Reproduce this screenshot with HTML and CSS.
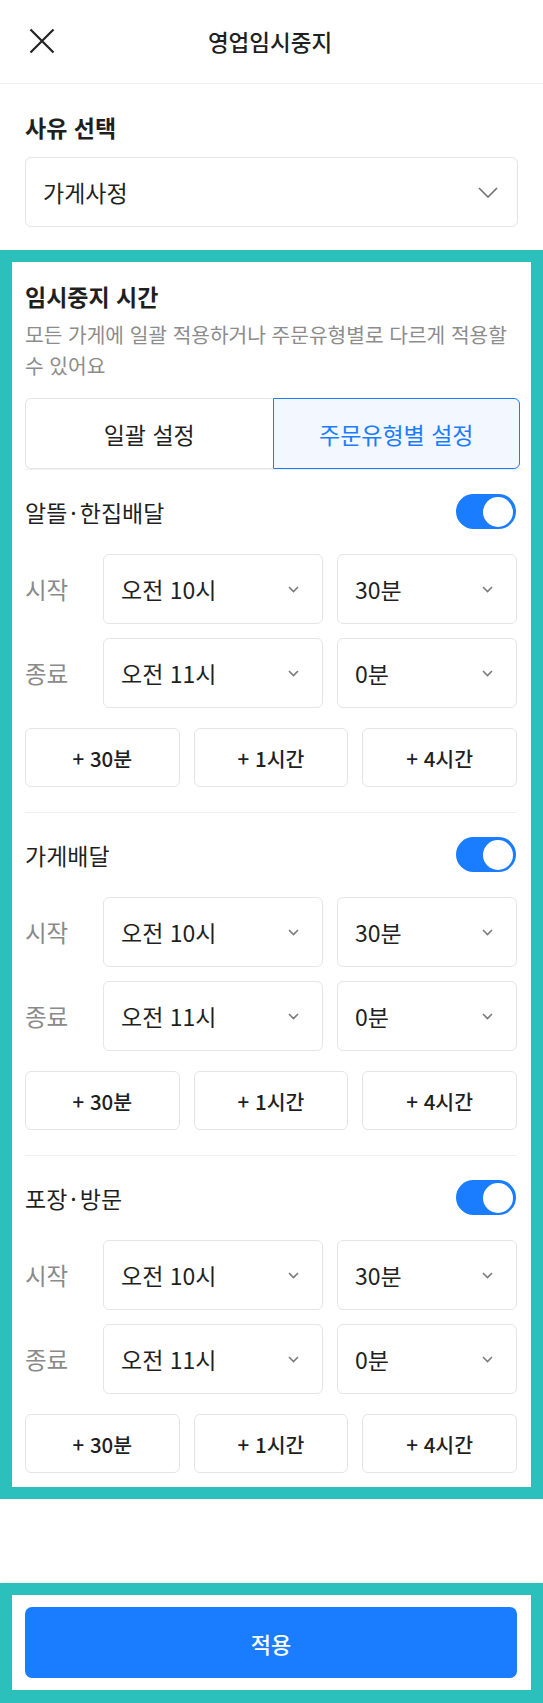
FILE: index.html
```html
<!DOCTYPE html>
<html lang="ko">
<head>
<meta charset="utf-8">
<title>영업임시중지</title>
<link rel="stylesheet" href="styles.css">
</head>
<body>
<div class="page">
  <header class="topbar">
    <button class="close" aria-label="닫기">
      <svg width="26" height="26" viewBox="0 0 26 26"><path d="M1.5 1.5 L24.5 24.5 M24.5 1.5 L1.5 24.5" stroke="#222" stroke-width="2.2" fill="none"/></svg>
    </button>
    <h1 class="topbar-title">영업임시중지</h1>
    <span class="topbar-side"></span>
  </header>

  <section class="reason">
    <h2 class="section-title">사유 선택</h2>
    <div class="select select-lg">
      <span>가게사정</span>
      <svg class="chev-lg" width="20" height="11" viewBox="0 0 20 11"><path d="M1 1 L10 10 L19 1" stroke="#6f6f6f" stroke-width="1.6" fill="none"/></svg>
    </div>
  </section>

  <section class="frame time-frame">
    <h2 class="section-title">임시중지 시간</h2>
    <p class="desc">모든 가게에 일괄 적용하거나 주문유형별로 다르게 적용할 수 있어요</p>
    <div class="segmented">
      <button class="seg">일괄 설정</button>
      <button class="seg seg-active">주문유형별 설정</button>
    </div>

    <div class="group">
      <div class="group-head"><span class="group-name">알뜰<span class="dot">·</span>한집배달</span><span class="toggle"><span class="knob"></span></span></div>
      <div class="time-row">
        <span class="time-label">시작</span>
        <div class="select"><span>오전 10시</span><svg class="chev" width="11" height="7" viewBox="0 0 11 7"><path d="M1 1 L5.5 5.5 L10 1" stroke="#7a7a7a" stroke-width="1.6" fill="none"/></svg></div>
        <div class="select"><span>30분</span><svg class="chev" width="11" height="7" viewBox="0 0 11 7"><path d="M1 1 L5.5 5.5 L10 1" stroke="#7a7a7a" stroke-width="1.6" fill="none"/></svg></div>
      </div>
      <div class="time-row">
        <span class="time-label">종료</span>
        <div class="select"><span>오전 11시</span><svg class="chev" width="11" height="7" viewBox="0 0 11 7"><path d="M1 1 L5.5 5.5 L10 1" stroke="#7a7a7a" stroke-width="1.6" fill="none"/></svg></div>
        <div class="select"><span>0분</span><svg class="chev" width="11" height="7" viewBox="0 0 11 7"><path d="M1 1 L5.5 5.5 L10 1" stroke="#7a7a7a" stroke-width="1.6" fill="none"/></svg></div>
      </div>
      <div class="quick">
        <button class="quick-btn">+ 30분</button>
        <button class="quick-btn">+ 1시간</button>
        <button class="quick-btn">+ 4시간</button>
      </div>
    </div>

    <div class="group">
      <div class="group-head"><span class="group-name">가게배달</span><span class="toggle"><span class="knob"></span></span></div>
      <div class="time-row">
        <span class="time-label">시작</span>
        <div class="select"><span>오전 10시</span><svg class="chev" width="11" height="7" viewBox="0 0 11 7"><path d="M1 1 L5.5 5.5 L10 1" stroke="#7a7a7a" stroke-width="1.6" fill="none"/></svg></div>
        <div class="select"><span>30분</span><svg class="chev" width="11" height="7" viewBox="0 0 11 7"><path d="M1 1 L5.5 5.5 L10 1" stroke="#7a7a7a" stroke-width="1.6" fill="none"/></svg></div>
      </div>
      <div class="time-row">
        <span class="time-label">종료</span>
        <div class="select"><span>오전 11시</span><svg class="chev" width="11" height="7" viewBox="0 0 11 7"><path d="M1 1 L5.5 5.5 L10 1" stroke="#7a7a7a" stroke-width="1.6" fill="none"/></svg></div>
        <div class="select"><span>0분</span><svg class="chev" width="11" height="7" viewBox="0 0 11 7"><path d="M1 1 L5.5 5.5 L10 1" stroke="#7a7a7a" stroke-width="1.6" fill="none"/></svg></div>
      </div>
      <div class="quick">
        <button class="quick-btn">+ 30분</button>
        <button class="quick-btn">+ 1시간</button>
        <button class="quick-btn">+ 4시간</button>
      </div>
    </div>

    <div class="group group-last">
      <div class="group-head"><span class="group-name">포장<span class="dot">·</span>방문</span><span class="toggle"><span class="knob"></span></span></div>
      <div class="time-row">
        <span class="time-label">시작</span>
        <div class="select"><span>오전 10시</span><svg class="chev" width="11" height="7" viewBox="0 0 11 7"><path d="M1 1 L5.5 5.5 L10 1" stroke="#7a7a7a" stroke-width="1.6" fill="none"/></svg></div>
        <div class="select"><span>30분</span><svg class="chev" width="11" height="7" viewBox="0 0 11 7"><path d="M1 1 L5.5 5.5 L10 1" stroke="#7a7a7a" stroke-width="1.6" fill="none"/></svg></div>
      </div>
      <div class="time-row">
        <span class="time-label">종료</span>
        <div class="select"><span>오전 11시</span><svg class="chev" width="11" height="7" viewBox="0 0 11 7"><path d="M1 1 L5.5 5.5 L10 1" stroke="#7a7a7a" stroke-width="1.6" fill="none"/></svg></div>
        <div class="select"><span>0분</span><svg class="chev" width="11" height="7" viewBox="0 0 11 7"><path d="M1 1 L5.5 5.5 L10 1" stroke="#7a7a7a" stroke-width="1.6" fill="none"/></svg></div>
      </div>
      <div class="quick">
        <button class="quick-btn">+ 30분</button>
        <button class="quick-btn">+ 1시간</button>
        <button class="quick-btn">+ 4시간</button>
      </div>
    </div>
  </section>

  <div class="spacer"></div>

  <footer class="frame bottom-frame">
    <button class="apply">적용</button>
  </footer>
</div>
</body>
</html>
```

FILE: styles.css
```css
* { box-sizing: border-box; }
html, body {
  margin: 0;
  padding: 0;
  background: #ffffff;
}
body {
  font-family: "Noto Sans CJK KR", "Noto Sans", sans-serif;
  color: #1f1f1f;
  overflow: hidden;
}
button {
  font-family: inherit;
  color: inherit;
  background: none;
  border: none;
  padding: 0;
  margin: 0;
}
h1, h2, p { margin: 0; }

.page {
  width: 543px;
  height: 1703px;
  display: flex;
  flex-direction: column;
}

/* top bar */
.topbar {
  height: 84px;
  border-bottom: 1px solid #efefef;
  display: grid;
  grid-template-columns: 1fr auto 1fr;
  align-items: center;
  padding: 0 0 1px 0;
  flex: none;
}
.close {
  width: 26px;
  height: 26px;
  display: flex;
  justify-self: start;
  margin-left: 29px;
}
.topbar-title {
  font-size: 22.5px;
  font-weight: 500;
  line-height: 30px;
  color: #1f1f1f;
  margin-right: 3px;
}

/* section titles */
.section-title {
  font-size: 23px;
  font-weight: 700;
  line-height: 30px;
  color: #1f1f1f;
}

/* reason */
.reason {
  padding: 28px 25px 0 25px;
  flex: none;
}
.select {
  height: 70px;
  border: 1px solid #e5e5e5;
  border-radius: 6px;
  display: flex;
  align-items: center;
  justify-content: space-between;
  padding: 0 23px 0 17px;
  font-size: 23px;
  line-height: 30px;
  color: #1f1f1f;
  background: #fff;
}
.select-lg {
  margin-top: 15px;
  padding: 0 19px 0 17px;
}

/* frames (teal highlight) */
.frame {
  border: 12px solid #2bc0bb;
  background: #fff;
  flex: none;
}
.time-frame {
  margin-top: 23px;
  padding: 19px 14px 14px 13px;
}
.desc {
  margin-top: 8px;
  font-size: 20.3px;
  line-height: 31px;
  color: #8c8c8c;
}

/* segmented control */
.segmented {
  margin-top: 17px;
  height: 71px;
  display: grid;
  grid-template-columns: 1fr 1fr;
  margin-right: -3px;
}
.seg {
  font-size: 23px;
  line-height: 30px;
  border: 1px solid #e5e5e5;
  border-radius: 6px 0 0 6px;
  border-right: none;
  color: #1f1f1f;
  background: #fff;
}
.seg-active {
  border: 1.5px solid #1a7cff;
  border-radius: 0 6px 6px 0;
  background: #f3f7ff;
  color: #1a7cff;
}

/* order type groups */
.group {
  padding: 24px 0 25px;
  border-top: 1px solid #f0f0f0;
}
.group:first-of-type {
  padding-top: 25px;
  border-top: none;
}
.group-last { padding-bottom: 0; }

.group-head {
  height: 35px;
  display: flex;
  align-items: center;
  justify-content: space-between;
  margin-bottom: 25px;
}
.group-name {
  font-size: 23px;
  line-height: 30px;
  color: #1f1f1f;
}
.dot { margin: 0 3px; }
.toggle {
  width: 60px;
  height: 35px;
  border-radius: 18px;
  background: #1a7cff;
  display: flex;
  align-items: center;
  justify-content: flex-end;
  padding-right: 3px;
  margin-right: 1px;
}
.knob {
  width: 30px;
  height: 30px;
  border-radius: 50%;
  background: #fff;
}

.time-row {
  display: grid;
  grid-template-columns: 64px 220px 1fr;
  column-gap: 14px;
  align-items: center;
  margin-bottom: 14px;
}
.time-label {
  font-size: 23.5px;
  line-height: 30px;
  color: #8a8a8a;
}
.chev { flex: none; }

.quick {
  margin-top: 20px;
  display: grid;
  grid-template-columns: repeat(3, 1fr);
  column-gap: 14px;
}
.time-row:nth-of-type(3) { margin-bottom: 0; }
.quick-btn {
  height: 59px;
  border: 1px solid #e5e5e5;
  border-radius: 6px;
  font-size: 20.5px;
  font-weight: 500;
  color: #1f1f1f;
  background: #fff;
}

.spacer {
  height: 84px;
  flex: none;
}

.bottom-frame {
  border-bottom-width: 13px;
  padding: 12px 14px 12px 13px;
  box-shadow: 0 -1px 3px rgba(0, 0, 0, 0.08);
}
.apply {
  display: block;
  width: 100%;
  height: 71px;
  border-radius: 7px;
  background: #1a7dff;
  color: #fff;
  font-size: 22px;
  font-weight: 500;
}
```
